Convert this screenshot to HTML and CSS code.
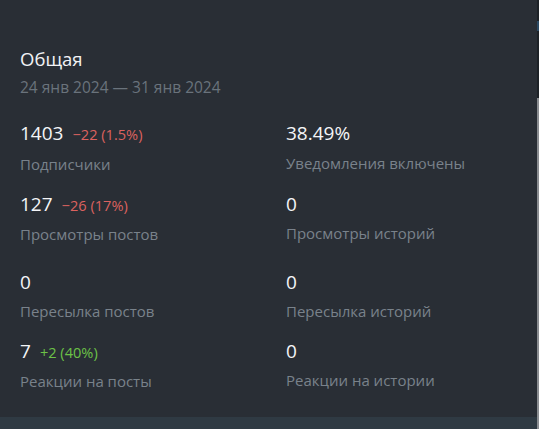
FILE: index.html
```html
<!DOCTYPE html>
<html lang="ru">
<head>
<meta charset="utf-8">
<link rel="stylesheet" href="styles.css">
</head>
<body>
<div class="page">
  <div class="card">
    <div class="title">Общая</div>
    <div class="date">24 янв 2024 — 31 янв 2024</div>
    <div class="grid">
      <div class="stat first">
        <div class="value">1403<span class="delta neg">−22 (1.5%)</span></div>
        <div class="label">Подписчики</div>
      </div>
      <div class="stat first">
        <div class="value">38.49%</div>
        <div class="label">Уведомления включены</div>
      </div>
      <div class="stat">
        <div class="value">127<span class="delta neg">−26 (17%)</span></div>
        <div class="label">Просмотры постов</div>
      </div>
      <div class="stat">
        <div class="value">0</div>
        <div class="label">Просмотры историй</div>
      </div>
      <div class="stat row3">
        <div class="value">0</div>
        <div class="label">Пересылка постов</div>
      </div>
      <div class="stat row3">
        <div class="value">0</div>
        <div class="label">Пересылка историй</div>
      </div>
      <div class="stat">
        <div class="value">7<span class="delta pos">+2 (40%)</span></div>
        <div class="label">Реакции на посты</div>
      </div>
      <div class="stat">
        <div class="value">0</div>
        <div class="label">Реакции на истории</div>
      </div>
    </div>
  </div>
  <div class="footer"></div>
  <div class="scrollbar"><div class="mark"></div><div class="thumb"></div></div>
</div>
</body>
</html>
```
FILE: styles.css
```css
html, body {
  margin: 0;
  padding: 0;
  height: 100%;
  background: #292e35;
  font-family: "Open Sans", "Noto Sans", sans-serif;
  overflow: hidden;
}
.page {
  position: relative;
  height: 429px;
  display: flex;
  flex-direction: column;
}
.card {
  flex: 1;
  padding: 47px 20px 0 20px;
}
.title {
  font-size: 18.5px;
  line-height: 24px;
  color: #f2f3f5;
}
.date {
  margin-top: 6px;
  font-size: 15.5px;
  line-height: 20px;
  color: #6a737c;
}
.grid {
  margin-top: 24px;
  display: grid;
  grid-template-columns: 266px 1fr;
  row-gap: 18px;
}
.stat.row3 {
  margin-top: 8px;
}
.value {
  font-size: 19px;
  line-height: 24px;
  color: #f4f5f7;
  display: flex;
  align-items: baseline;
}
.delta {
  font-size: 14.6px;
  margin-left: 9px;
}
.delta.neg { color: #dc625f; }
.delta.pos { color: #6cc247; }
.label {
  margin-top: 7px;
  font-size: 15px;
  line-height: 20px;
  color: #79828b;
}
.stat.first .label {
  margin-top: 8px;
}
.footer {
  height: 12px;
  background: #2f3a43;
}
.scrollbar {
  position: absolute;
  top: 0;
  right: 0;
  width: 2px;
  height: 100%;
  background: #1d2227;
  display: flex;
  flex-direction: column;
}
.mark {
  margin-top: 21px;
  height: 10px;
  background: #2c4a63;
}
.thumb {
  margin-top: 67px;
  flex: 1;
  background: #8a8d91;
}
```
